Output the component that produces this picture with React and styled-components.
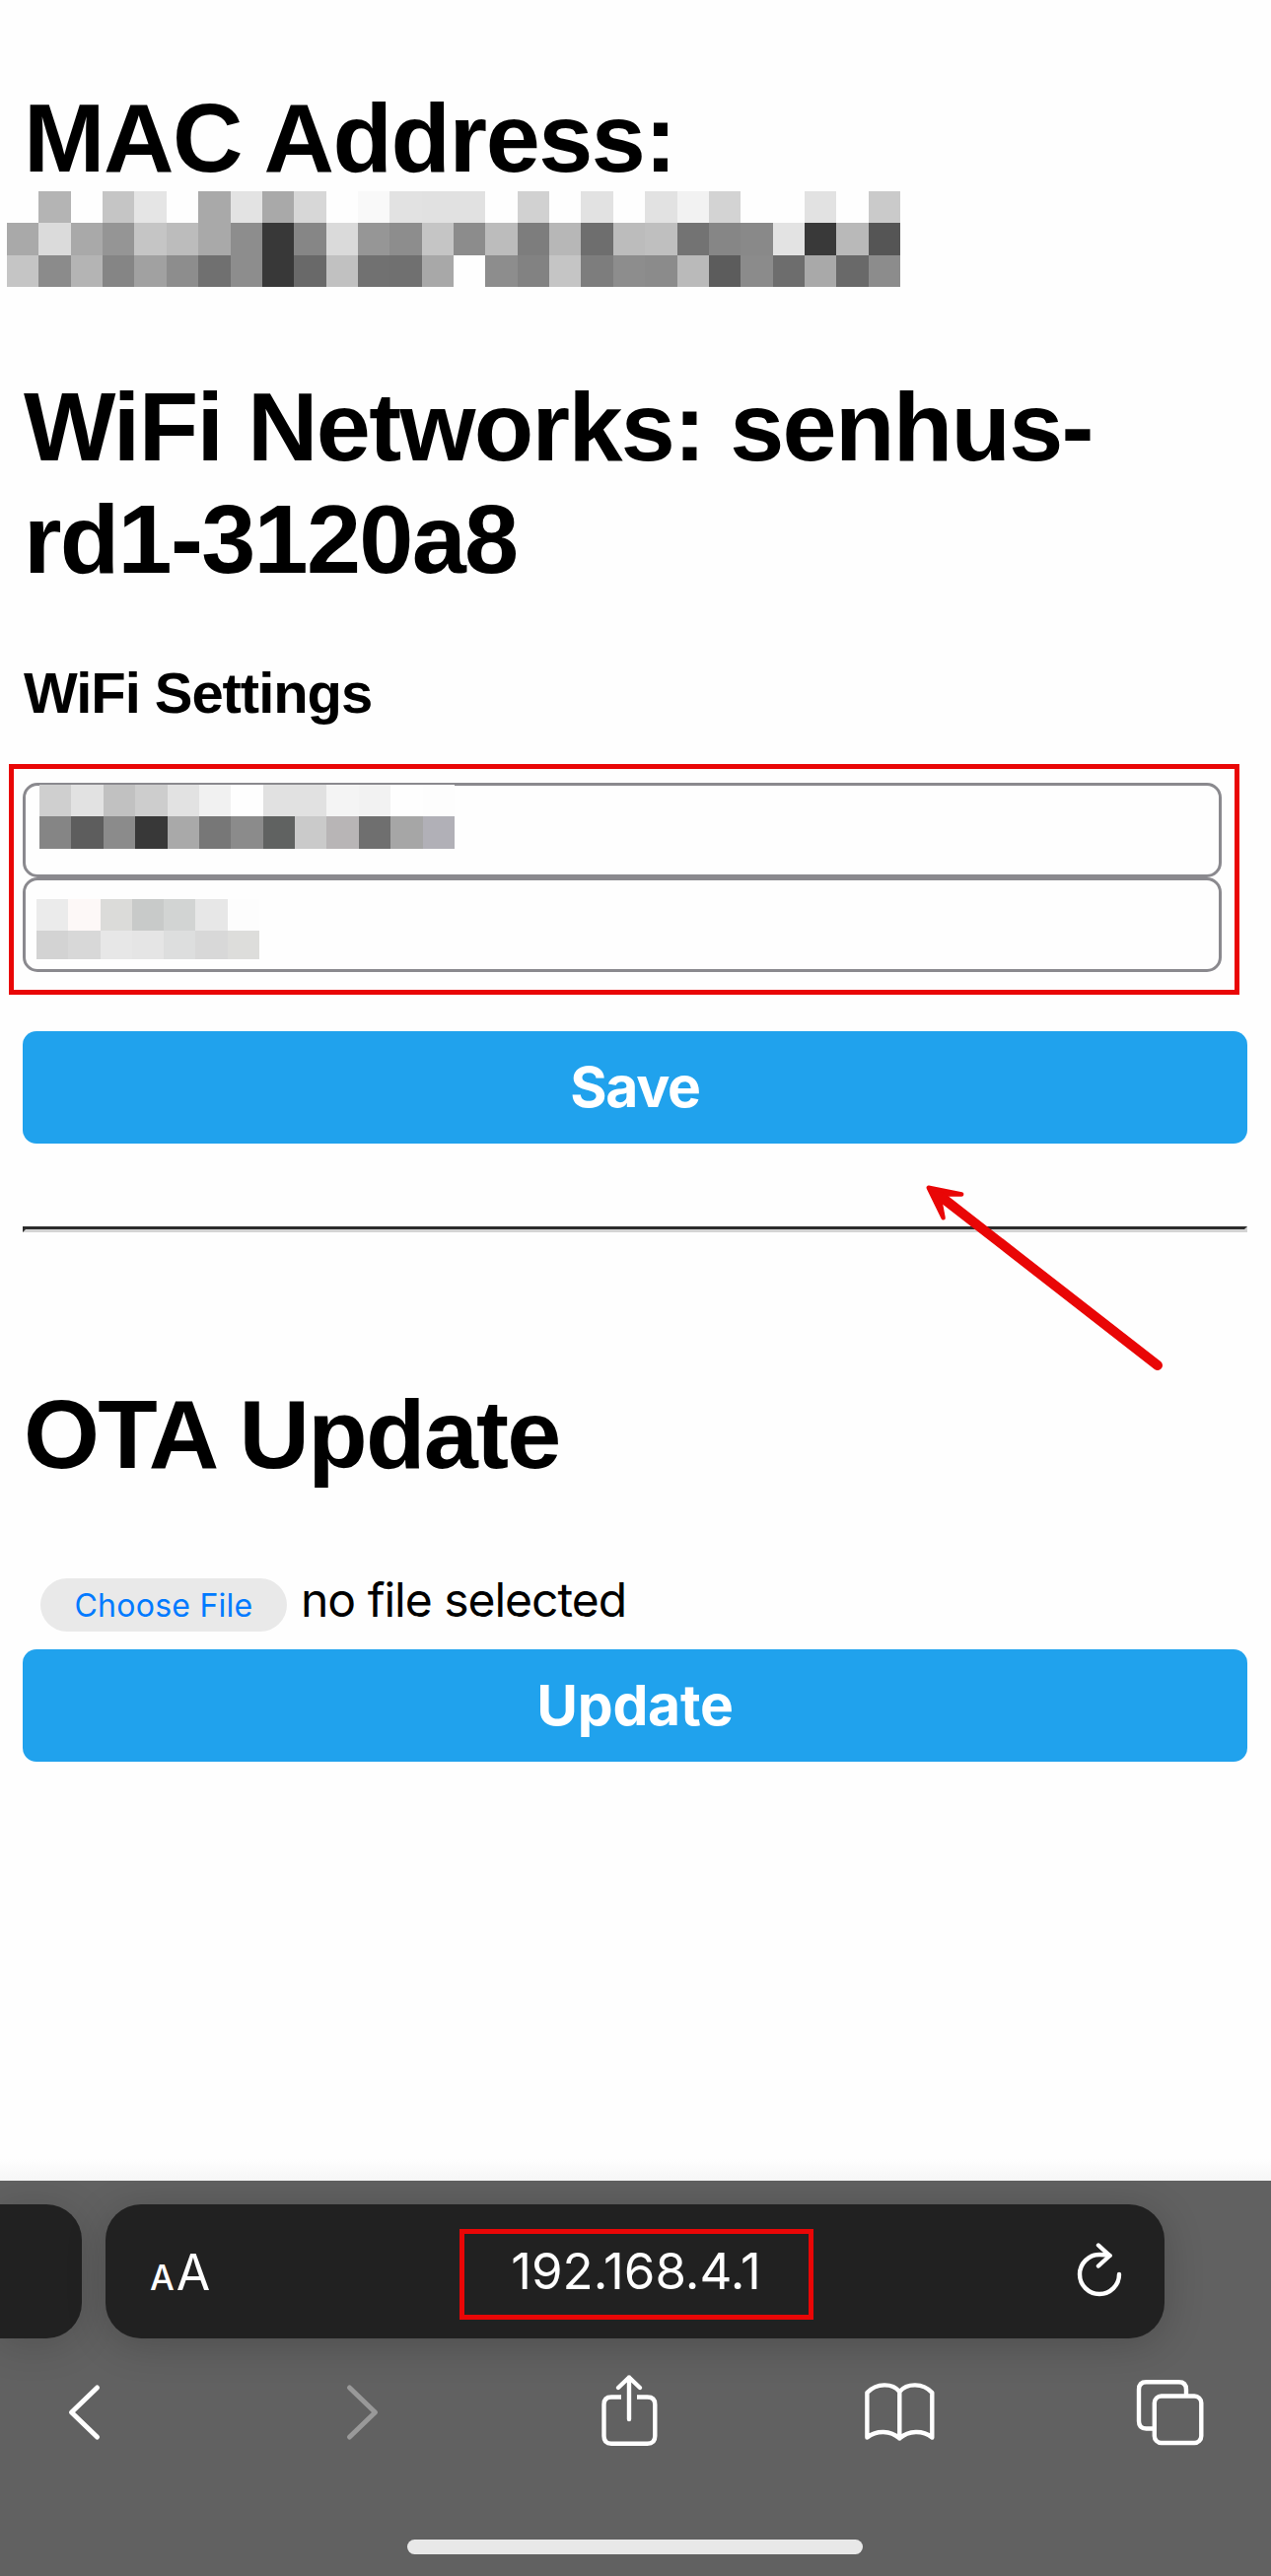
import React from "react";
import styled, { createGlobalStyle } from "styled-components";

const Global = createGlobalStyle`
  * { box-sizing: border-box; }
  html, body { margin: 0; padding: 0; background: #fefefe; }
`;

const Screen = styled.div`
  width: 1289px;
  height: 2613px;
  display: flex;
  flex-direction: column;
  overflow: hidden;
  background: #fefefe;
  color: #000;
  font-family: "Liberation Sans", Helvetica, Arial, sans-serif;
`;

const Page = styled.main`
  position: relative;
  height: 2212px;
  padding: 83px 24px 0 23px;
  display: flex;
  flex-direction: column;
  background: linear-gradient(#fefefe 0, #fefefe 2190px, #f6f6f6 2212px);
`;

const Title = styled.h1`
  margin: ${(p) => p.$gap || 0}px 0 0;
  padding-left: 1px;
  font-size: 99px;
  line-height: 114px;
  font-weight: 700;
  letter-spacing: ${(p) => p.$track || 0}px;
  white-space: nowrap;
`;

const Subtitle = styled.h3`
  margin: 66px 0 0;
  padding-left: 1px;
  font-size: 58px;
  line-height: 66px;
  font-weight: 700;
  letter-spacing: -1.05px;
`;

const Mosaic = styled.div`
  display: grid;
  width: ${(p) => p.$width}px;
  flex: none;
  grid-template-columns: repeat(${(p) => p.$cols}, 1fr);
  grid-template-rows: ${(p) => p.$rows};
  margin: ${(p) => p.$margin || "0"};
`;

const Cell = styled.i`
  background: ${(p) => p.$tone};
`;

const Highlight = styled.section`
  width: 1248px;
  height: 234px;
  margin: 39px 0 0 -14px;
  padding: 14px 13px 0 9px;
  border: 5px solid #e90606;
`;

const Field = styled.div`
  height: 96px;
  border: 3px solid #8a898e;
  border-radius: 15px;
`;

const ActionButton = styled.button`
  display: flex;
  flex: none;
  justify-content: center;
  width: 1242px;
  height: 114px;
  margin-top: ${(p) => p.$gap}px;
  padding: 0;
  border: 0;
  border-radius: 14px;
  background: #20a2ed;
  color: #fff;
  font: 700 57px/114px Inter, sans-serif;
  letter-spacing: ${(p) => p.$track || 0}px;
`;

const Divider = styled.hr`
  width: 1242px;
  height: 6px;
  flex: none;
  margin: 84px 0 0;
  border: 3px solid;
  border-color: #2c2c2c #d4d4d4 #d4d4d4 #2c2c2c;
`;

const FileRow = styled.div`
  display: flex;
  align-items: center;
  height: 54px;
  margin: 89px 0 0 18px;
`;

const ChooseButton = styled.button`
  width: 250px;
  height: 54px;
  padding: 0;
  border: 0;
  border-radius: 27px;
  background: #e9e9e9;
  color: #007aff;
  font: 400 32px/55px Inter, sans-serif;
  letter-spacing: 0.25px;
`;

const FileStatus = styled.span`
  margin: -10px 0 0 14px;
  font: 400 48px/54px Inter, sans-serif;
  letter-spacing: -1px;
`;

const Pointer = styled.svg`
  position: absolute;
  left: 930px;
  top: 1190px;
`;

const Chrome = styled.footer`
  height: 401px;
  display: flex;
  flex-direction: column;
  background: #616161;
  color: #fff;
`;

const AddressRow = styled.div`
  display: flex;
  gap: 24px;
  padding-top: 24px;
`;

const PreviousTab = styled.div`
  width: 83px;
  height: 136px;
  border-radius: 0 36px 36px 0;
  background: #212121;
  box-shadow: 0 6px 40px rgba(0, 0, 0, 0.16);
`;

const AddressBar = styled.div`
  display: flex;
  align-items: center;
  justify-content: space-between;
  width: 1074px;
  height: 136px;
  padding: 0 41px 0 45px;
  border-radius: 36px;
  background: #212121;
  box-shadow: 0 6px 40px rgba(0, 0, 0, 0.2);
`;

const TextSize = styled.div`
  display: flex;
  align-items: baseline;
  width: 118px;
  gap: 2px;
  margin-top: 6px;
  font: 500 35px/60px Inter, sans-serif;
`;

const LargeLetter = styled.span`
  font-size: 50px;
  font-weight: 400;
`;

const Address = styled.div`
  width: 359px;
  height: 92px;
  margin: 6px 0 0 0;
  border: 5px solid #e90606;
  text-align: center;
  font: 400 51px/76px Inter, sans-serif;
`;

const ReloadSlot = styled.div`
  width: 120px;
  display: flex;
  justify-content: flex-end;
`;

const Toolbar = styled.nav`
  display: grid;
  grid-template-columns: 282px 271px 274px 275px 80px;
  margin-top: 30px;
  padding-left: 45px;
`;

const HomeIndicator = styled.div`
  width: 462px;
  height: 15px;
  margin: 84px 0 0 413px;
  border-radius: 8px;
  background: #e8e8e8;
`;

const Icon = ({ w, h, box, color = "#fff", sw = 4.4, children }) => (
  <svg width={w} height={h} viewBox={box} fill="none" stroke={color} strokeWidth={sw} strokeLinecap="round" strokeLinejoin="round">
    {children}
  </svg>
);

const macTones = [
  "fefefe b4b4b4 fefefe c5c5c5 e5e5e5 fefefe a9a9a9 e3e3e3 a9a9a9 d7d7d7 fefefe f9f9f9 e2e2e2 e1e1e1 e1e1e1 fefefe d1d1d1 fefefe e2e2e2 fefefe e2e2e2 f2f2f2 d3d3d3 fefefe fefefe e2e2e2 fefefe cacaca",
  "a9a9a9 dbdbdb a9a9a9 959595 c5c5c5 bcbcbc a9a9a9 8d8d8d 383838 868686 dadada 969696 8d8d8d c5c5c5 8c8c8c bcbcbc 7d7d7d b7b7b7 6e6e6e bcbcbc bfbfbf 737373 868686 898989 e3e3e3 393939 b9b9b9 555555",
  "c5c5c5 8b8b8b b4b4b4 858585 a1a1a1 8d8d8d 707070 8d8d8d 383838 696969 c1c1c1 717171 707070 a8a8a8 fefefe 8d8d8d 828282 c5c5c5 7d7d7d 8d8d8d 8b8b8b bababa 5c5c5c 8b8b8b 6d6d6d a9a9a9 696969 8c8c8c",
];
const ssidTones = [
  "cfcfcf e2e2e2 c1c1c1 cdcdcd e2e2e2 f1f1f1 fefefe e1e1e1 e1e1e1 f4f4f4 f2f2f2 fefefe fdfdfd",
  "858585 5d5d5d 8b8b8b 383838 a9a9a9 777777 8b8b8b 606261 cacaca b8b5b6 6f6f6f a6a6a6 b1b0b7",
];
const passTones = [
  "ebebeb fdf8f7 dbdbd9 c8cac9 d2d4d3 e7e7e7 fdfdfd",
  "d3d3d3 d8d8d8 e7e7e7 e5e5e5 dddede d8d8d8 dddddb",
];

const Redaction = ({ tones, width, rows, margin }) => {
  const cells = tones.flatMap((row) => row.split(" "));
  return (
    <Mosaic $width={width} $cols={cells.length / tones.length} $rows={rows} $margin={margin}>
      {cells.map((tone, i) => (
        <Cell key={i} $tone={`#${tone}`} />
      ))}
    </Mosaic>
  );
};

export default function App() {
  return (
    <Screen>
      <Global />
      <Page>
        <Title $track={-1.45}>MAC Address:</Title>
        <Redaction tones={macTones} width={906} rows="32px 33px 32px" margin="-3px 0 0 -16px" />
        <Title $gap={85} $track={-1.7}>
          WiFi Networks: senhus-
          <br />
          rd1-3120a8
        </Title>
        <Subtitle>WiFi Settings</Subtitle>
        <Highlight>
          <Field>
            <Redaction tones={ssidTones} width={421} rows="32px 33px" margin="-1px 0 0 14px" />
          </Field>
          <Field>
            <Redaction tones={passTones} width={226} rows="32px 29px" margin="19px 0 0 11px" />
          </Field>
        </Highlight>
        <ActionButton $gap={37} $track={-1.2}>Save</ActionButton>
        <Divider />
        <Title $gap={148} $track={-1.75}>OTA Update</Title>
        <FileRow>
          <ChooseButton>Choose File</ChooseButton>
          <FileStatus>no file selected</FileStatus>
        </FileRow>
        <ActionButton $gap={18} $track={-0.2}>Update</ActionButton>
        <Pointer width="260" height="210" viewBox="930 1190 260 210" fill="#e90606" stroke="#e90606" strokeLinecap="round" strokeLinejoin="round">
          <path d="M957 1216 L1174 1385" strokeWidth="10" fill="none" />
          <path d="M941.700 1204.700 L975.200 1211.500 L959 1211.200 L953.500 1219 L956.600 1235.400 Z" strokeWidth="4.400" />
        </Pointer>
      </Page>
      <Chrome>
        <AddressRow>
          <PreviousTab />
          <AddressBar>
            <TextSize>
              A<LargeLetter>A</LargeLetter>
            </TextSize>
            <Address>192.168.4.1</Address>
            <ReloadSlot>
              <Icon w={50} h={60} box="1090 2274 50 60">
                <path d="M1135 2307 A20 20 0 1 1 1115 2287 Q1121 2287 1125.500 2288" />
                <path d="M1114 2277.500 L1125.500 2288 L1114 2298.500" />
              </Icon>
            </ReloadSlot>
          </AddressBar>
        </AddressRow>
        <Toolbar>
          <Icon w={80} h={90} box="45 2402 80 90" sw={5}>
            <path d="M98.500 2422 L72.500 2447 L98.500 2472" />
          </Icon>
          <Icon w={80} h={90} box="327 2402 80 90" sw={5} color="#999">
            <path d="M354.500 2422 L380.500 2447 L354.500 2472" />
          </Icon>
          <Icon w={80} h={90} box="598 2402 80 90">
            <path d="M630 2431.500 H620 Q612.500 2431.500 612.500 2439 V2471 Q612.500 2478.700 620 2478.700 H656.500 Q664.300 2478.700 664.300 2471 V2439 Q664.300 2431.500 656.500 2431.500 H646" strokeLinecap="butt" />
            <path d="M638 2454 V2411.500 M627 2422 L638 2411.500 L649 2422" />
          </Icon>
          <Icon w={80} h={90} box="872 2402 80 90">
            <path d="M912.300 2426 C905 2417 889 2417 879.400 2427 V2472.500 C889 2465 903 2465 912.300 2473.500 C921.500 2465 936 2465 945.300 2472.500 V2427 C936 2417 920 2417 912.300 2426 V2473.500" />
          </Icon>
          <Icon w={80} h={90} box="1147 2402 80 90">
            <path d="M1203 2429 V2424 Q1203 2416.300 1195.500 2416.300 H1162.500 Q1155 2416.300 1155 2424 V2456 Q1155 2463.500 1162.500 2463.500 H1169" strokeLinecap="butt" />
            <rect x="1170.800" y="2430.500" width="47.500" height="47.500" rx="7" />
          </Icon>
        </Toolbar>
        <HomeIndicator />
      </Chrome>
    </Screen>
  );
}
